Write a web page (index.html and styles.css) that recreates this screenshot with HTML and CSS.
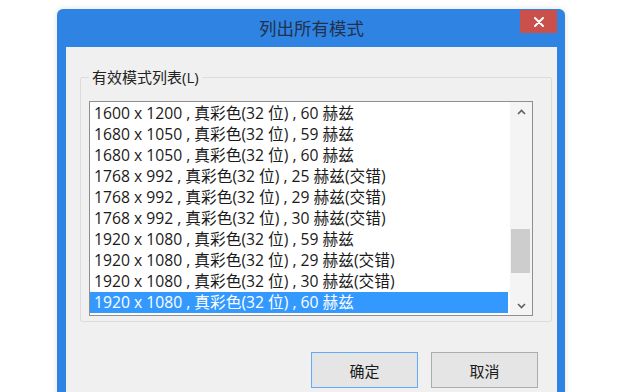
FILE: index.html
```html
<!DOCTYPE html>
<html lang="zh-CN">
<head>
    <meta charset="UTF-8">
    <title>列出所有模式</title>
    <link rel="stylesheet" href="styles.css">
</head>
<body>
    <div class="dialog">
        <!-- 标题栏 -->
        <div class="title-bar">
            <span class="title">列出所有模式</span>
            <button class="close-btn" aria-label="关闭">
                <svg width="10" height="10" viewBox="0 0 10 10">
                    <path d="M1 1 L9 9 M9 1 L1 9" stroke="#fff" stroke-width="2" stroke-linecap="round"/>
                </svg>
            </button>
        </div>

        <div class="dialog-body">
            <fieldset class="group">
                <legend>有效模式列表(L)</legend>
                <div class="list-box">
                    <ul class="mode-list" id="mode-list"></ul>
                    <div class="scrollbar">
                        <svg class="arrow" width="9" height="6" viewBox="0 0 9 6">
                            <path d="M1 5 L4.5 1.5 L8 5" fill="none" stroke="#606060" stroke-width="1.6"/>
                        </svg>
                        <div class="track">
                            <div class="thumb"></div>
                        </div>
                        <svg class="arrow" width="9" height="6" viewBox="0 0 9 6">
                            <path d="M1 1 L4.5 4.5 L8 1" fill="none" stroke="#606060" stroke-width="1.6"/>
                        </svg>
                    </div>
                </div>
            </fieldset>

            <div class="button-row">
                <button class="btn btn-default">确定</button>
                <button class="btn">取消</button>
            </div>
        </div>
    </div>

    <script>
        const modes = [
            ['1600 x 1200', '60', false],
            ['1680 x 1050', '59', false],
            ['1680 x 1050', '60', false],
            ['1768 x 992', '25', true],
            ['1768 x 992', '29', true],
            ['1768 x 992', '30', true],
            ['1920 x 1080', '59', false],
            ['1920 x 1080', '29', true],
            ['1920 x 1080', '30', true],
            ['1920 x 1080', '60', false]
        ];

        const list = document.getElementById('mode-list');
        modes.forEach((mode, i) => {
            const item = document.createElement('li');
            item.textContent = `${mode[0]} , 真彩色(32 位) , ${mode[1]} 赫兹${mode[2] ? '(交错)' : ''}`;
            if (i === modes.length - 1) {
                item.className = 'selected';
            }
            list.appendChild(item);
        });
    </script>
</body>
</html>
```

FILE: styles.css
```css
body {
    margin: 0;
    background-color: #ffffff;
    font-family: "Open Sans", "Noto Sans CJK SC", sans-serif;
    font-size: 15px;
    color: #1a1a1a;
    overflow: hidden;
}
.dialog {
    width: 491px;
    margin: 9px 0 0 57px;
    padding: 0 8px 0 9px;
    background-color: #2f84e3;
    border-radius: 6px 6px 0 0;
    box-shadow: 0 0 6px rgba(0, 0, 0, 0.12);
}
.title-bar {
    height: 38px;
    display: flex;
    align-items: center;
    justify-content: center;
    position: relative;
}
.title {
    font-family: "Noto Sans CJK SC", sans-serif;
    font-size: 17.5px;
    color: #22314c;
    margin-top: -2px;
}
.close-btn {
    position: absolute;
    top: 1px;
    right: 0;
    width: 37px;
    height: 23px;
    border: none;
    padding: 0;
    background-color: #c9504b;
    display: flex;
    align-items: center;
    justify-content: center;
}
.dialog-body {
    background-color: #f0f0f0;
    height: 345px;
    padding: 22px 5px 0 14px;
}
.group {
    margin: 0;
    padding: 16px 18px 5px 8px;
    border: 1px solid #dcdcdc;
    border-radius: 2px;
    min-width: 0;
}
.group legend {
    padding: 0 3px;
    margin-left: 0;
    color: #222;
    line-height: 16px;
}
.list-box {
    display: flex;
    height: 213px;
    border: 1px solid #8f8f8f;
    background-color: #ffffff;
}
.mode-list {
    flex: 1;
    list-style: none;
    margin: 0;
    padding: 1px 0 0 0;
    font-size: 15.7px;
}
.mode-list li {
    height: 21px;
    line-height: 21px;
    padding-left: 4px;
    white-space: nowrap;
    margin-right: 2px;
}
.mode-list li.selected {
    background-color: #3399ff;
    color: #ffffff;
}
.scrollbar {
    width: 22px;
    display: flex;
    flex-direction: column;
    align-items: center;
    background-color: #f4f4f4;
    padding: 7px 0 6px;
    box-sizing: border-box;
}
.track {
    flex: 1;
    width: 100%;
    display: flex;
    flex-direction: column;
    justify-content: flex-end;
    padding: 0 2px 30px 1px;
    box-sizing: border-box;
}
.thumb {
    height: 44px;
    background-color: #cdcdcd;
}
.button-row {
    display: flex;
    justify-content: flex-end;
    gap: 13px;
    margin-top: 30px;
    padding-right: 14px;
}
.btn {
    width: 107px;
    height: 36px;
    font-family: "Noto Sans CJK SC", sans-serif;
    font-size: 15px;
    color: #1a1a1a;
    background-color: #e5e5e5;
    border: 1px solid #acacac;
    padding: 0;
}
.btn-default {
    border-color: #6fa8e6;
    box-shadow: inset 0 0 0 1px #d5e6f8;
}
```
